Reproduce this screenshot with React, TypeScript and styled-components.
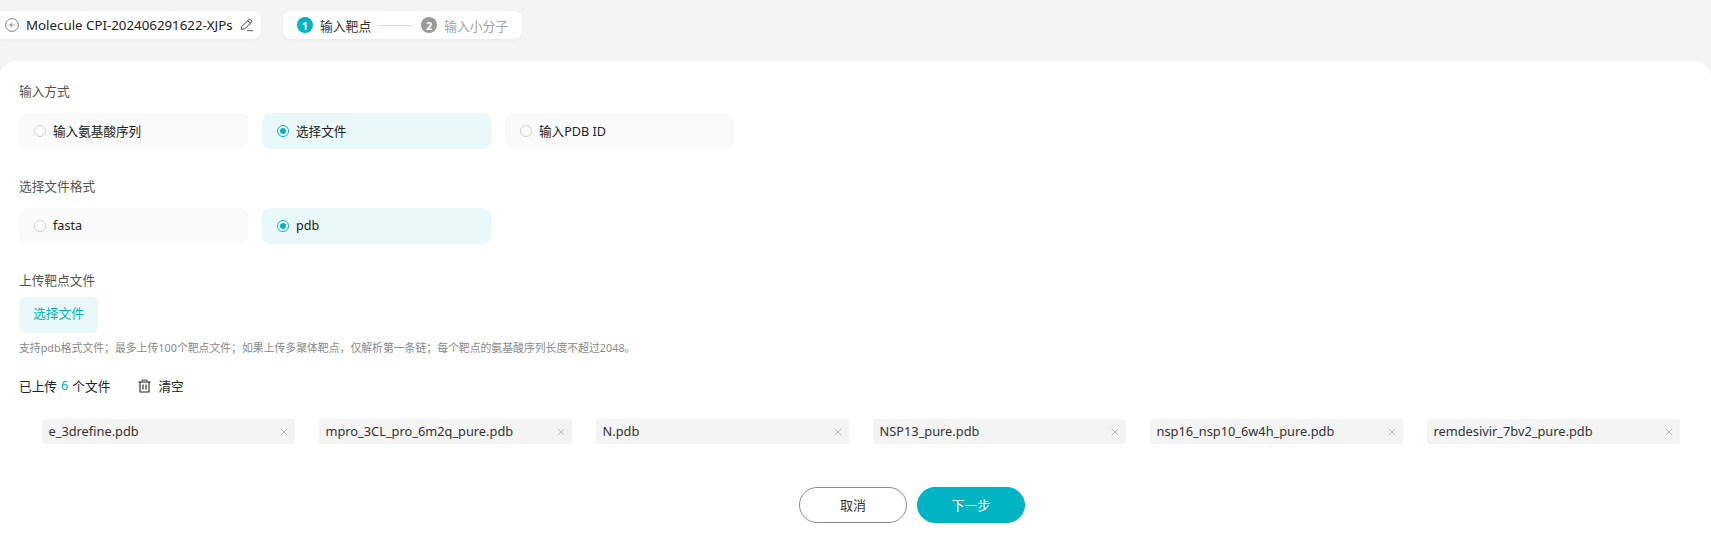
import styled, { createGlobalStyle } from "styled-components";
import { X } from "lucide-react";

const GlobalStyle = createGlobalStyle`
  html, body {
    margin: 0;
    padding: 0;
    height: 100%;
    overflow: hidden;
    background: #f4f4f4;
    font-family: "Noto Sans", "Noto Sans CJK SC", sans-serif;
  }
  * {
    box-sizing: border-box;
  }
`;

const teal = "#00b4c4";

const Page = styled.div`
  height: 537px;
  display: flex;
  flex-direction: column;
  background: #f4f4f4;
`;

const TopBar = styled.header`
  display: flex;
  gap: 22px;
  padding-top: 11px;
  height: 61px;
`;

const TopCard = styled.div`
  height: 28px;
  display: flex;
  align-items: center;
  background: #fff;
  border-radius: 8px;
  box-shadow: 0 1px 3px rgba(0, 0, 0, 0.04);
  font-size: 12.8px;
`;

const TitleCard = styled(TopCard)`
  width: 261px;
  padding-left: 5px;
  color: #222;
  border-radius: 0 8px 8px 0;
`;

const Title = styled.span`
  margin: 0 7px 0 7px;
  font-size: 13.3px;
  white-space: nowrap;
`;

const StepCard = styled(TopCard)`
  width: 239px;
  padding-left: 14px;
`;

const StepDot = styled.span<{ $active?: boolean }>`
  width: 16px;
  height: 16px;
  border-radius: 50%;
  background: ${(p) => (p.$active ? teal : "#999")};
  color: #fff;
  font-size: 11px;
  font-weight: 700;
  display: flex;
  align-items: center;
  justify-content: center;
  margin-right: 7px;
`;

const StepText = styled.span<{ $active?: boolean }>`
  color: ${(p) => (p.$active ? "#333" : "#a3a3a3")};
`;

const StepLine = styled.span`
  width: 36px;
  height: 1px;
  background: #d9d9d9;
  margin: 0 7px;
`;

const Panel = styled.main`
  flex: 1;
  background: #fff;
  border-radius: 16px 16px 0 0;
  padding: 22px 0 0 19px;
`;

const Label = styled.div<{ $gap?: number }>`
  font-size: 12.7px;
  line-height: 16px;
  color: #555;
  margin-bottom: ${(p) => p.$gap ?? 14}px;
`;

const OptionRow = styled.div<{ $gap: number }>`
  display: flex;
  gap: 14px;
  margin-bottom: ${(p) => p.$gap}px;
`;

const Option = styled.div<{ $selected?: boolean }>`
  width: 229px;
  height: 36px;
  padding: 0 0 2px 15px;
  display: flex;
  align-items: center;
  gap: 7px;
  border-radius: 8px;
  background: ${(p) => (p.$selected ? "#e9f8f9" : "#fafafa")};
  color: #222;
  font-size: 12.6px;
`;

const Radio = styled.span<{ $selected?: boolean }>`
  width: 12px;
  height: 12px;
  margin-top: 2px;
  border-radius: 50%;
  border: 1px solid ${(p) => (p.$selected ? teal : "#cfcfcf")};
  background: #fff;
  display: flex;
  align-items: center;
  justify-content: center;

  &::after {
    content: "";
    display: ${(p) => (p.$selected ? "block" : "none")};
    width: 6px;
    height: 6px;
    border-radius: 50%;
    background: ${teal};
  }
`;

const UploadButton = styled.button`
  display: block;
  width: 79px;
  height: 36px;
  border: 0;
  border-radius: 6px;
  background: #e9f8f9;
  color: ${teal};
  font: inherit;
  font-size: 12.7px;
  padding: 0 0 5px;
`;

const Hint = styled.div`
  font-size: 10.85px;
  line-height: 16px;
  color: #8a8a8a;
  margin: 7px 0 20px;
`;

const UploadedRow = styled.div`
  display: flex;
  align-items: center;
  height: 18px;
  font-size: 12.7px;
  color: #222;
`;

const Count = styled.span`
  color: ${teal};
  margin: 0 4px;
`;

const ClearAction = styled.span`
  display: flex;
  align-items: center;
  gap: 7px;
  margin-left: 28px;

  svg {
    margin-top: 2px;
  }
`;

const ChipRow = styled.div`
  display: flex;
  gap: 24px;
  margin: 25px 0 43px 23px;
`;

const Chip = styled.div`
  width: 253px;
  height: 25px;
  padding: 0 5px 2px 6.5px;
  display: flex;
  align-items: center;
  justify-content: space-between;
  background: #f4f4f4;
  border-radius: 3px;
  font-size: 12.8px;
  color: #333;

  svg {
    margin-top: 2px;
  }
`;

const Footer = styled.div`
  display: flex;
  gap: 10px;
  margin-left: 780px;
`;

const PillButton = styled.button<{ $primary?: boolean }>`
  width: 108px;
  height: 36px;
  border-radius: 18px;
  border: 1px solid ${(p) => (p.$primary ? teal : "#8c8c8c")};
  background: ${(p) => (p.$primary ? teal : "#fff")};
  color: ${(p) => (p.$primary ? "#fff" : "#333")};
  font: inherit;
  font-size: 13px;
  padding: 0 0 2px;
`;

const BackIcon = () => (
  <svg width="14" height="14" viewBox="0 0 14 14" fill="none">
    <circle cx="7" cy="7" r="6.4" stroke="#777" strokeWidth="0.9" />
    <path d="M4 7 L7 4.8 V9.2 Z" fill="#999" />
    <path d="M7 7 H10" stroke="#aaa" strokeWidth="1" />
  </svg>
);

const PenIcon = () => (
  <svg width="14" height="14" viewBox="0 0 14 14" fill="none">
    <path
      d="M1.2 11.2 L2 8.4 L8.8 1.6 Q9.6 0.9 10.4 1.6 L11.4 2.6 Q12.1 3.4 11.4 4.2 L4.6 11 Z"
      stroke="#444"
      strokeWidth="1"
      strokeLinejoin="round"
    />
    <path d="M7.8 2.8 L10.2 5.2" stroke="#444" strokeWidth="1" />
    <path d="M7 12.6 H13" stroke="#777" strokeWidth="1.2" />
  </svg>
);

const TrashIcon = () => (
  <svg width="13" height="14" viewBox="0 0 13 14" fill="none">
    <path d="M0.5 3 H12.5" stroke="#222" strokeWidth="1" />
    <path d="M4 3 V1 H9 V3" stroke="#444" strokeWidth="1" />
    <path d="M2 3 V13 H11 V3" stroke="#222" strokeWidth="1.1" />
    <path d="M5 5.5 V10.5 M8 5.5 V10.5" stroke="#333" strokeWidth="1.2" />
  </svg>
);

const files = [
  "e_3drefine.pdb",
  "mpro_3CL_pro_6m2q_pure.pdb",
  "N.pdb",
  "NSP13_pure.pdb",
  "nsp16_nsp10_6w4h_pure.pdb",
  "remdesivir_7bv2_pure.pdb",
];

const App = () => {
  return (
    <Page>
      <GlobalStyle />
      <TopBar>
        <TitleCard>
          <BackIcon />
          <Title>Molecule CPI-202406291622-XJPs</Title>
          <PenIcon />
        </TitleCard>
        <StepCard>
          <StepDot $active>1</StepDot>
          <StepText $active>输入靶点</StepText>
          <StepLine />
          <StepDot>2</StepDot>
          <StepText>输入小分子</StepText>
        </StepCard>
      </TopBar>
      <Panel>
        <Label>输入方式</Label>
        <OptionRow $gap={29}>
          <Option>
            <Radio />
            输入氨基酸序列
          </Option>
          <Option $selected>
            <Radio $selected />
            选择文件
          </Option>
          <Option>
            <Radio />
            输入PDB ID
          </Option>
        </OptionRow>
        <Label>选择文件格式</Label>
        <OptionRow $gap={28}>
          <Option>
            <Radio />
            fasta
          </Option>
          <Option $selected>
            <Radio $selected />
            pdb
          </Option>
        </OptionRow>
        <Label $gap={9}>上传靶点文件</Label>
        <UploadButton>选择文件</UploadButton>
        <Hint>
          支持pdb格式文件；最多上传100个靶点文件；如果上传多聚体靶点，仅解析第一条链；每个靶点的氨基酸序列长度不超过2048。
        </Hint>
        <UploadedRow>
          已上传<Count>6</Count>个文件
          <ClearAction>
            <TrashIcon />
            清空
          </ClearAction>
        </UploadedRow>
        <ChipRow>
          {files.map((name) => (
            <Chip key={name}>
              {name}
              <X size={12} strokeWidth={1.1} color="#888" />
            </Chip>
          ))}
        </ChipRow>
        <Footer>
          <PillButton>取消</PillButton>
          <PillButton $primary>下一步</PillButton>
        </Footer>
      </Panel>
    </Page>
  );
};

export default App;
